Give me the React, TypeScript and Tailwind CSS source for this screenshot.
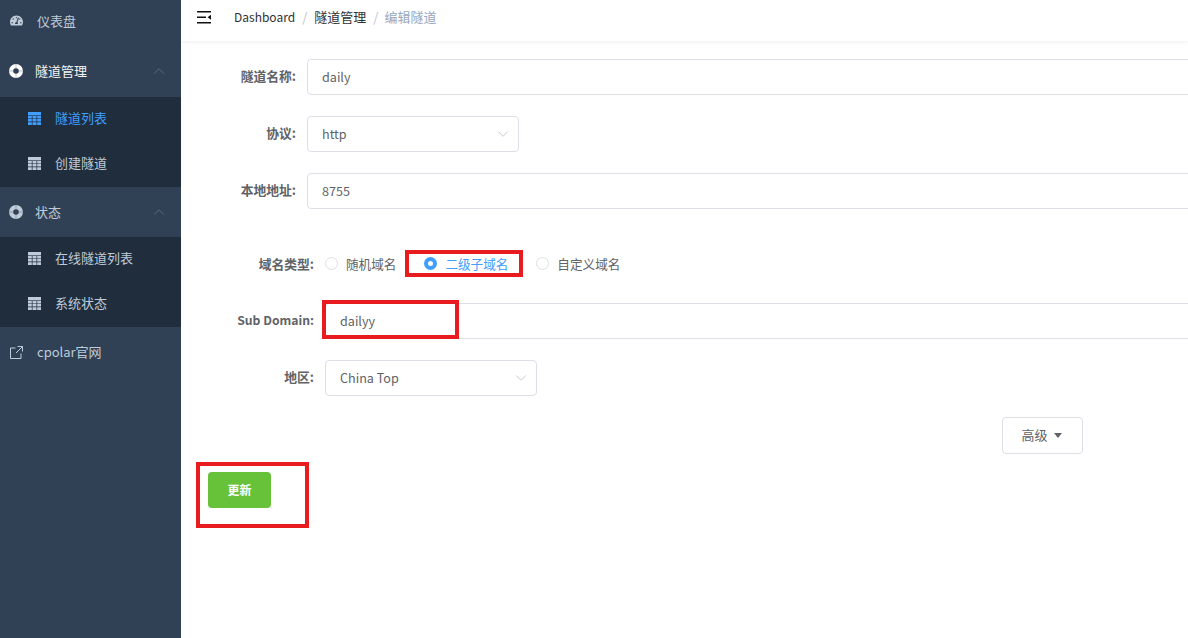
import { ChevronDown, ChevronUp } from 'lucide-react';
import { FaTachometerAlt } from 'react-icons/fa';

const font = { fontFamily: '"Noto Sans CJK SC", "Noto Sans", sans-serif' };

const TableIcon = ({ active }: { active?: boolean }) => (
  <svg viewBox="0 0 13 13" className={`w-[13px] h-[13px] ${active ? 'text-[#409eff]' : 'text-[#bfcbd9]'}`} fill="currentColor">
    <path d="M0 0h13v3.4H0z" />
    <path d="M0 4h3.8v2.4H0zM4.5 4h4v2.4h-4zM9.2 4H13v2.4H9.2zM0 7h3.8v2.6H0zM4.5 7h4v2.6h-4zM9.2 7H13v2.6H9.2zM0 10.2h3.8V13H0zM4.5 10.2h4V13h-4zM9.2 10.2H13V13H9.2z" />
  </svg>
);

const RingIcon = ({ bright }: { bright?: boolean }) => (
  <svg viewBox="0 0 14 14" className={`w-[14px] h-[14px] ${bright ? 'text-white' : 'text-[#bfcbd9]'}`} fill="currentColor">
    <path fillRule="evenodd" d="M7 0a7 7 0 1 0 0 14A7 7 0 0 0 7 0zm0 4.2a2.8 2.8 0 1 1 0 5.6 2.8 2.8 0 0 1 0-5.6z" />
    <path d="M6.6 0h.8v4.4h-.8zM6.6 9.6h.8V14h-.8zM0 6.6h4.4v.8H0zM9.6 6.6H14v.8H9.6z" fill="#304156" fillOpacity={0.35} />
  </svg>
);

const SubItem = ({ label, active }: { label: string; active?: boolean }) => (
  <div className={`h-[45px] flex items-center pl-[28px] pb-[3px] gap-[14px] ${active ? 'text-[#409eff]' : 'text-[#bfcbd9]'}`}>
    <TableIcon active={active} />
    <span className="text-[13px]">{label}</span>
  </div>
);

const GroupTitle = ({ label, bright, tall }: { label: string; bright?: boolean; tall?: boolean }) => (
  <div className={`flex items-center pl-[9px] pr-[13px] ${tall ? 'h-[51px] pb-[2px]' : 'h-[50px]'}`}>
    <RingIcon bright={bright} />
    <span className={`ml-[12px] text-[13px] flex-1 ${bright ? 'text-[#f4f4f5]' : 'text-[#bfcbd9]'}`}>{label}</span>
    <ChevronUp className="w-[18px] h-[18px] text-[#5f6f82]" strokeWidth={1.2} />
  </div>
);

const Sidebar = () => (
  <aside className="w-[181px] shrink-0 bg-[#304156] overflow-hidden">
    <div className="-mt-1 h-[50px] flex items-center pl-[10px] pb-[1px] text-[#bfcbd9]">
      <FaTachometerAlt className="w-[13px] h-[13px]" />
      <span className="ml-[14px] text-[13px]">仪表盘</span>
    </div>
    <GroupTitle label="隧道管理" bright tall />
    <div className="bg-[#1f2d3d]">
      <SubItem label="隧道列表" active />
      <SubItem label="创建隧道" />
    </div>
    <GroupTitle label="状态" />
    <div className="bg-[#1f2d3d]">
      <SubItem label="在线隧道列表" />
      <SubItem label="系统状态" />
    </div>
    <div className="h-[50px] flex items-center pl-[10px] text-[#bfcbd9]">
      <svg viewBox="0 0 13 13" className="w-[13px] h-[13px]" fill="none" stroke="currentColor" strokeWidth={1}>
        <path d="M5.5 2H.5v10.5H11V7.5M7.5.5h5v5M12.5.5 6 7" />
      </svg>
      <span className="ml-[14px] text-[13px]">cpolar官网</span>
    </div>
  </aside>
);

const Header = () => (
  <header className="h-[41px] shrink-0 flex items-center pl-[16px] pb-[7px] bg-white shadow-[0_1px_4px_rgba(0,21,41,0.08)]">
    <svg viewBox="0 0 14 13" className="w-[14px] h-[13px] text-[#111]" fill="currentColor">
      <path d="M0 0h14v1.6H0zM0 5.4h9v1.6H0zM0 11h14v1.6H0zM14 3.8v5l-3.4-2.5z" />
    </svg>
    <div className="ml-[23px] flex items-center text-[13px]">
      <span className="text-[#303133] text-[12px]">Dashboard</span>
      <span className="mx-[7px] text-[#c0c4cc]">/</span>
      <span className="text-[#303133]">隧道管理</span>
      <span className="ml-[7px] mr-[6px] text-[#c0c4cc]">/</span>
      <span className="text-[#97a8be]">编辑隧道</span>
    </div>
  </header>
);

const Label = ({ children, wide }: { children: string; wide?: boolean }) => (
  <label className={`shrink-0 text-right font-bold text-[#606266] pr-[11px] pb-[2px] ${children === 'Sub Domain:' ? 'text-[12.2px]' : 'text-[12.8px]'} ${wide ? 'w-[144px]' : 'w-[126px]'}`}>
    {children}
  </label>
);

const TextInput = ({ label, value, wide }: { label: string; value: string; wide?: boolean }) => (
  <div className="flex items-center h-9 mt-[21px] first:mt-0">
    <Label wide={wide}>{label}</Label>
    <input
      readOnly
      value={value}
      className="h-9 flex-1 min-w-0 -mr-4 px-[14px] pb-[2px] border border-[#dcdfe6] rounded text-[12.6px] text-[#606266] outline-none"
    />
  </div>
);

const Select = ({ label, value, wide }: { label: string; value: string; wide?: boolean }) => (
  <div className="flex items-center h-9 mt-[21px]">
    <Label wide={wide}>{label}</Label>
    <div className="w-[212px] h-9 px-[14px] flex items-center justify-between border border-[#dcdfe6] rounded text-[12.6px] text-[#606266]">
      {value}
      <ChevronDown className="w-[18px] h-[18px] -mr-[8px] text-[#c0c4cc]" strokeWidth={1.2} />
    </div>
  </div>
);

const Radio = ({ label, checked, className }: { label: string; checked?: boolean; className?: string }) => (
  <div className={`flex items-center gap-[8px] text-[12.6px] ${checked ? 'text-[#409eff]' : 'text-[#606266]'} ${className ?? ''}`}>
    {checked ? (
      <span className="w-[13px] h-[13px] rounded-full bg-[#409eff] flex items-center justify-center">
        <span className="w-[5px] h-[5px] rounded-full bg-white" />
      </span>
    ) : (
      <span className="w-[13px] h-[13px] rounded-full border border-[#dcdfe6]" />
    )}
    {label}
  </div>
);

export default function App() {
  return (
    <div className="relative w-[1188px] h-[638px] flex overflow-hidden bg-white" style={font}>
      <Sidebar />
      <main className="flex-1 min-w-0 flex flex-col overflow-hidden">
        <Header />
        <form className="pt-[18px]">
          <TextInput label="隧道名称:" value="daily" />
          <Select label="协议:" value="http" />
          <TextInput label="本地地址:" value="8755" />
          <div className="flex items-center h-9 mt-[37px] [&>label]:pb-0">
            <Label wide>域名类型:</Label>
            <Radio label="随机域名" />
            <Radio label="二级子域名" checked className="ml-[28px]" />
            <Radio label="自定义域名" className="ml-[28px]" />
          </div>
          <div className="mt-[21px]">
            <TextInput label="Sub Domain:" value="dailyy" wide />
          </div>
          <Select label="地区:" value="China Top" wide />
          <div className="mt-[21px] flex justify-end pr-[105px]">
            <button type="button" className="w-[81px] h-[37px] flex items-center justify-center gap-[6px] pr-[2px] border border-[#dcdfe6] rounded text-[13px] text-[#606266]">
              <span className="-mt-[2px]">高级</span>
              <span className="border-x-[4px] border-x-transparent border-t-[5px] border-t-[#606266]" />
            </button>
          </div>
          <button type="button" className="mt-[18px] ml-[27px] w-[63px] h-9 bg-[#67c23a] rounded text-white text-xs font-bold">
            更新
          </button>
        </form>
      </main>
      <div className="absolute left-[405px] top-[250px] w-[118px] h-[27px] border-[4px] border-[#e81c1f]" />
      <div className="absolute left-[322px] top-[300px] w-[137px] h-[39px] border-[4px] border-[#e81c1f]" />
      <div className="absolute left-[196px] top-[462px] w-[113px] h-[66px] border-[4px] border-[#e81c1f]" />
    </div>
  );
}
